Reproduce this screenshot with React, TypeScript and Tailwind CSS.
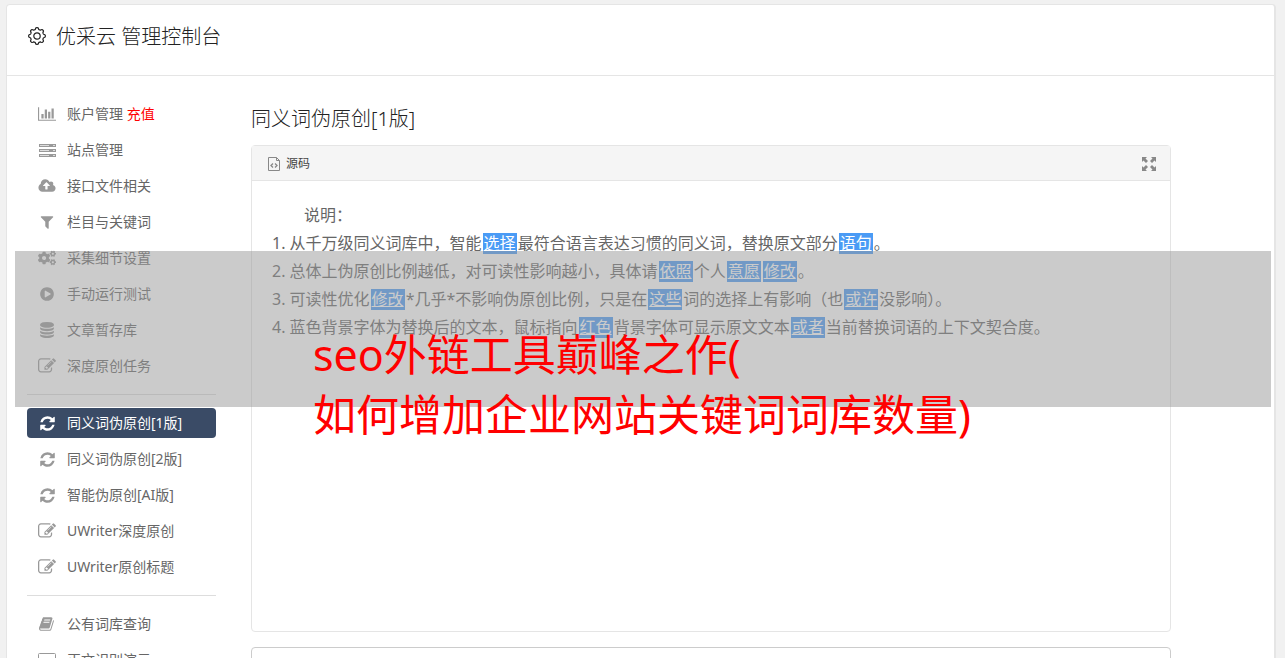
import type { ReactNode } from "react";
import { FaCogs } from "react-icons/fa";

type IconName =
  | "chart"
  | "server"
  | "cloud"
  | "filter"
  | "cogs"
  | "play"
  | "database"
  | "edit"
  | "refresh"
  | "book"
  | "screen";

const PATHS: Partial<Record<IconName, { box: string; d: string; size: string }>> = {
  chart: {
    box: "0 0 2048 1792",
    size: "h-4 w-[18px]",
    d: "M640 896v512h-256v-512h256zm384-512v1024h-256v-1024h256zm1024 1152v128h-2048v-1536h128v1408h1920zm-640-896v768h-256v-768h256zm384-384v1152h-256v-1152h256z",
  },
  cloud: {
    box: "0 0 1920 1792",
    size: "h-4 w-[18px]",
    d: "M1280 864q0-14-9-23l-352-352q-9-9-23-9t-23 9l-351 351q-10 12-10 24 0 14 9 23t23 9h224v352q0 13 9.5 22.5t22.5 9.5h192q13 0 22.5-9.5t9.5-22.5v-352h224q13 0 22.5-9.5t9.5-22.5zm640 288q0 159-112.5 271.5t-271.5 112.5h-1088q-185 0-316.5-131.5t-131.5-316.5q0-130 70-240t188-165q-2-30-2-43 0-212 150-362t362-150q156 0 285.5 87t188.5 231q71-62 166-62 106 0 181 75t75 181q0 76-41 138 130 31 213.5 135.5t83.5 238.5z",
  },
  filter: {
    box: "0 0 1792 1792",
    size: "size-4",
    d: "M1595 295q17 41-14 70l-493 493v742q0 42-39 59-13 5-25 5-27 0-45-19l-256-256q-19-19-19-45v-486l-493-493q-31-29-14-70 17-39 59-39h1280q42 0 59 39z",
  },
  play: {
    box: "0 0 1792 1792",
    size: "size-4",
    d: "M896 128q209 0 385.5 103t279.5 279.5 103 385.5-103 385.5-279.5 279.5-385.5 103-385.5-103-279.5-279.5-103-385.5 103-385.5 279.5-279.5 385.5-103zm384 823q32-18 32-55t-32-55l-544-320q-31-19-64-1-32 19-32 55v640q0 36 32 55 16 8 32 8 17 0 32-9z",
  },
  database: {
    box: "0 0 1792 1792",
    size: "size-4",
    d: "M896 768q237 0 443-43t325-127v170q0 69-103 128t-280 93.5-385 34.5-385-34.5-280-93.5-103-128v-170q119 84 325 127t443 43zm0 768q237 0 443-43t325-127v170q0 69-103 128t-280 93.5-385 34.5-385-34.5-280-93.5-103-128v-170q119 84 325 127t443 43zm0-384q237 0 443-43t325-127v170q0 69-103 128t-280 93.5-385 34.5-385-34.5-280-93.5-103-128v-170q119 84 325 127t443 43zm0-1152q208 0 385 34.5t280 93.5 103 128v128q0 69-103 128t-280 93.5-385 34.5-385-34.5-280-93.5-103-128v-128q0-69 103-128t280-93.5 385-34.5z",
  },
  edit: {
    box: "0 0 1792 1792",
    size: "size-[18px]",
    d: "M888 1184l116-116-152-152-116 116v56h96v96h56zm440-720q-16-16-33 1l-350 350q-17 17-1 33t33-1l350-350q17-17 1-33zm80 594v190q0 119-84.5 203.5t-203.5 84.5h-832q-119 0-203.5-84.5t-84.5-203.5v-832q0-119 84.5-203.5t203.5-84.5h832q63 0 117 25 15 7 18 23 3 17-9 29l-49 49q-14 14-32 8-23-6-45-6h-832q-66 0-113 47t-47 113v832q0 66 47 113t113 47h832q66 0 113-47t47-113v-126q0-13 9-22l64-64q15-15 35-7t20 29zm-96-738l288 288-672 672h-288v-288zm444 132l-92 92-288-288 92-92q28-28 68-28t68 28l152 152q28 28 28 68t-28 68z",
  },
  refresh: {
    box: "0 0 1792 1792",
    size: "size-[17px]",
    d: "M1639 1056q0 5-1 7-64 268-268 434.5t-478 166.5q-146 0-282.5-55t-243.5-157l-129 129q-19 19-45 19t-45-19-19-45v-448q0-26 19-45t45-19h448q26 0 45 19t19 45-19 45l-137 137q71 66 161 102t187 36q134 0 250-65t186-179q11-17 53-117 8-23 30-23h192q13 0 22.5 9.5t9.5 22.5zm25-800v448q0 26-19 45t-45 19h-448q-26 0-45-19t-19-45 19-45l138-138q-148-137-349-137-134 0-250 65t-186 179q-11 17-53 117-8 23-30 23h-199q-13 0-22.5-9.5t-9.5-22.5v-7q65-268 270-434.5t480-166.5q146 0 284 55.5t245 156.5l130-129q19-19 45-19t45 19 19 45z",
  },
  book: {
    box: "0 0 1792 1792",
    size: "size-4",
    d: "M1639 478q40 57 18 129l-275 906q-19 64-76.5 107.5t-122.5 43.5h-923q-77 0-148.5-53.5t-99.5-131.5q-24-67-2-127 0-4 3-27t4-37q1-8-3-21.5t-3-19.5q2-11 8-21t16.5-23.5 16.5-23.5q23-38 45-91.5t30-91.5q3-10 .5-30t-.5-28q3-11 17-28t17-23q21-36 42-92t25-90q1-9-2.5-32t.5-28q4-13 22-30.5t22-22.5q19-26 42.5-84.5t27.5-96.5q1-8-3-25.5t-2-26.5q2-8 9-18t18-23 17-21q8-12 16.5-30.5t15-35 16-36 19.5-32 26.5-23.5 36-11.5 47.5 5.5l-1 3q38-9 51-9h761q74 0 114 56t18 130l-274 906q-36 119-71.5 153.5t-128.5 34.5h-869q-27 0-38 15-11 16-1 43 24 70 144 70h923q29 0 56-15.5t35-41.5l300-987q7-22 5-57 38 15 59 43zm-1064 2q-4 13 2 22.5t20 9.5h608q13 0 25.5-9.5t16.5-22.5l21-64q4-13-2-22.5t-20-9.5h-608q-13 0-25.5 9.5t-16.5 22.5zm-83 256q-4 13 2 22.5t20 9.5h608q13 0 25.5-9.5t16.5-22.5l21-64q4-13-2-22.5t-20-9.5h-608q-13 0-25.5 9.5t-16.5 22.5z",
  },
};

function gearOutline() {
  const points: string[] = [];
  for (let i = 0; i < 96; i++) {
    const angle = (i / 96) * Math.PI * 2;
    const radius = 7.5 + 0.85 * Math.tanh(2.2 * Math.cos(8 * angle));
    points.push(`${(9 + radius * Math.cos(angle)).toFixed(2)} ${(9 + radius * Math.sin(angle)).toFixed(2)}`);
  }
  return `M${points.join("L")}Z`;
}

function Gear() {
  return (
    <svg viewBox="0 0 18 18" className="mt-[5px] size-[18px]" fill="none" stroke="currentColor" strokeWidth="1.2" strokeLinejoin="round">
      <path d={gearOutline()} />
      <circle cx="9" cy="9" r="3.2" />
    </svg>
  );
}

function Icon({ name }: { name: IconName }) {
  if (name === "cogs") return <FaCogs className="size-[18px]" />;
  if (name === "server")
    return (
      <svg viewBox="0 0 17 13" className="h-[13px] w-[17px]" fill="currentColor">
        {[0, 5, 10].map((y) => (
          <g key={y}>
            <rect x="0" y={y} width="17" height="3" />
            <path d={`M1 ${y + 1}h9v1h-9zM14 ${y + 1}h2v1h-2z`} fill="#ddd" />
          </g>
        ))}
      </svg>
    );
  if (name === "screen")
    return (
      <svg viewBox="0 0 18 16" className="h-4 w-[18px]" fill="none" stroke="currentColor">
        <rect x="0.5" y="1.5" width="17" height="11" rx="1" />
        <path d="M5 15h8M9 13v2" />
      </svg>
    );
  const icon = PATHS[name]!;
  return (
    <svg viewBox={icon.box} className={icon.size} fill="currentColor">
      <path d={icon.d} />
    </svg>
  );
}

type Item = { icon: IconName; label: string; extra?: string; active?: boolean };

const GROUPS: Item[][] = [
  [
    { icon: "chart", label: "账户管理", extra: "充值" },
    { icon: "server", label: "站点管理" },
    { icon: "cloud", label: "接口文件相关" },
    { icon: "filter", label: "栏目与关键词" },
    { icon: "cogs", label: "采集细节设置" },
    { icon: "play", label: "手动运行测试" },
    { icon: "database", label: "文章暂存库" },
    { icon: "edit", label: "深度原创任务" },
  ],
  [
    { icon: "refresh", label: "同义词伪原创[1版]", active: true },
    { icon: "refresh", label: "同义词伪原创[2版]" },
    { icon: "refresh", label: "智能伪原创[AI版]" },
    { icon: "edit", label: "UWriter深度原创" },
    { icon: "edit", label: "UWriter原创标题" },
  ],
  [
    { icon: "book", label: "公有词库查询" },
    { icon: "screen", label: "正文识别演示" },
  ],
];

function Sidebar() {
  return (
    <nav className="w-[189px] shrink-0 text-sm">
      {GROUPS.map((group, i) => (
        <ul
          key={i}
          className={
            i === 0
              ? "flex flex-col gap-1.5"
              : "mt-[13px] flex flex-col gap-1.5 border-t border-[#ddd] pt-[13px]"
          }
        >
          {group.map((item) => (
            <li key={item.label}>
              <a
                href="#"
                className={
                  item.active
                    ? "flex h-[30px] items-center gap-2.5 rounded bg-[#3a4b66] px-2.5 text-white"
                    : "flex h-[30px] items-center gap-2.5 rounded px-2.5 text-[#666]"
                }
              >
                <span
                  className={
                    item.active
                      ? "flex w-5 justify-center text-white"
                      : "flex w-5 justify-center text-[#999]"
                  }
                >
                  <Icon name={item.icon} />
                </span>
                <span className="whitespace-nowrap">
                  {item.label}
                  {item.extra && <span className="text-[#f00]"> {item.extra}</span>}
                </span>
              </a>
            </li>
          ))}
        </ul>
      ))}
    </nav>
  );
}

function Word({ children }: { children: ReactNode }) {
  return (
    <a href="#" className="mx-px inline-block h-[21px] bg-[#4a9bf5] px-px leading-[21px] text-white underline">
      {children}
    </a>
  );
}

function Editor() {
  return (
    <section className="min-h-[487px] rounded border border-[#e5e5e5]">
      <div className="flex h-[35px] items-center justify-between border-b border-[#e5e5e5] bg-[#f5f5f5] pt-0.5 pr-3.5 pl-4 text-xs text-[#444]">
        <button type="button" className="flex items-center gap-1.5">
          <svg viewBox="0 0 12 14" className="h-3.5 w-3" fill="none" stroke="#888">
            <path d="M.5.5h8l3 3v10H.5z" />
            <path d="M8.500.5v3h3" />
            <path d="M5 6.500l-2 2 2 2M7 6.500l2 2-2 2" strokeWidth="1.300" />
          </svg>
          源码
        </button>
        <button type="button" aria-label="全屏">
          <svg viewBox="0 0 14 14" className="size-3.5" fill="#888">
            <path d="M0 0h5L3.500 1.500 6 4 4 6 1.500 3.500 0 5zM14 0v5l-1.500-1.500L10 6 8 4l2.500-2.500L9 0zM0 14V9l1.500 1.500L4 8l2 2-2.500 2.500L5 14zM14 14H9l1.500-1.500L8 10l2-2 2.500 2.500L14 9z" />
          </svg>
        </button>
      </div>
      <div className="px-5 pt-5 text-base leading-7 text-[#666]">
        <p className="indent-8">说明：</p>
        <ol>
          <li>
            1. 从千万级同义词库中，智能<Word>选择</Word>最符合语言表达习惯的同义词，替换原文部分
            <Word>语句</Word>。
          </li>
          <li>
            2. 总体上伪原创比例越低，对可读性影响越小，具体请<Word>依照</Word>个人<Word>意愿</Word>
            <Word>修改</Word>。
          </li>
          <li>
            3. 可读性优化<Word>修改</Word>*几乎*不影响伪原创比例，只是在<Word>这些</Word>
            词的选择上有影响（也<Word>或许</Word>没影响）。
          </li>
          <li>
            4. 蓝色背景字体为替换后的文本，鼠标指向<Word>红色</Word>背景字体可显示原文文本
            <Word>或者</Word>当前替换词语的上下文契合度。
          </li>
        </ol>
      </div>
    </section>
  );
}

export default function App() {
  return (
    <div className="relative h-screen overflow-hidden bg-[#f1f1f1] pt-1 pr-[9px] pl-1.5 font-['Noto_Sans','Noto_Sans_CJK_SC',sans-serif]">
      <div className="min-h-full rounded-t border border-r-2 border-[#e5e5e5] bg-white">
        <header className="flex h-[71px] items-start gap-2.5 border-b border-[#e5e5e5] px-[21px] pt-[17px] text-[#222]">
          <Gear />
          <h1 className="text-xl leading-[30px] font-light">优采云 管理控制台</h1>
        </header>
        <div className="flex gap-[35px] pt-[23px] pr-[103px] pl-5">
          <Sidebar />
          <main className="min-w-0 flex-1">
            <h2 className="mb-[11px] pt-[5px] text-xl leading-[30px] font-light text-[#222]">同义词伪原创[1版]</h2>
            <Editor />
            <section className="mt-[15px] h-40 rounded border border-[#ccc]" />
          </main>
        </div>
      </div>
      <div className="pointer-events-none absolute inset-x-[15px] top-[251px] mr-[-1px] h-[156px] bg-[#979797]/50" />
      <p className="pointer-events-none absolute top-[325px] left-[313px] text-[43px] leading-[60px] whitespace-nowrap text-[#f00]">
        seo外链工具巅峰之作(
        <br />
        如何增加企业网站关键词词库数量)
      </p>
    </div>
  );
}
